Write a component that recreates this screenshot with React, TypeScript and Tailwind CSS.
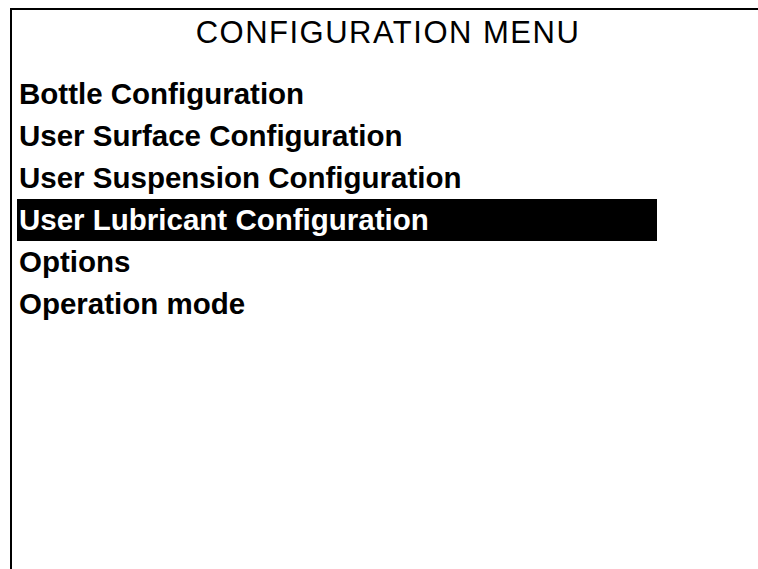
const items = [
  "Bottle Configuration",
  "User Surface Configuration",
  "User Suspension Configuration",
  "User Lubricant Configuration",
  "Options",
  "Operation mode",
];

const selected = 3;

export default function App() {
  return (
    <div className="h-[569px] w-[758px] overflow-hidden bg-white pl-[10px] pt-[8px] font-['Liberation_Sans',Arial,sans-serif] text-black">
      <div className="h-full border-l-2 border-t-2 border-black pt-[3px]">
        {/* Title */}
        <div className="h-[40px] pl-[6px] text-center text-[31px] leading-[40px] tracking-[1.5px]">
          CONFIGURATION MENU
        </div>

        {/* Menu entries */}
        <div className="mt-[20px] flex flex-col px-[5px]">
          {items.map((item, index) => (
            <div
              key={index}
              className={
                index === selected
                  ? "h-[42px] w-[640px] bg-black pl-[2px] text-[29.5px] font-bold leading-[42px] text-white"
                  : "h-[42px] w-[640px] pl-[2px] text-[29.5px] font-bold leading-[42px]"
              }
            >
              {item}
            </div>
          ))}
        </div>
      </div>
    </div>
  );
}
